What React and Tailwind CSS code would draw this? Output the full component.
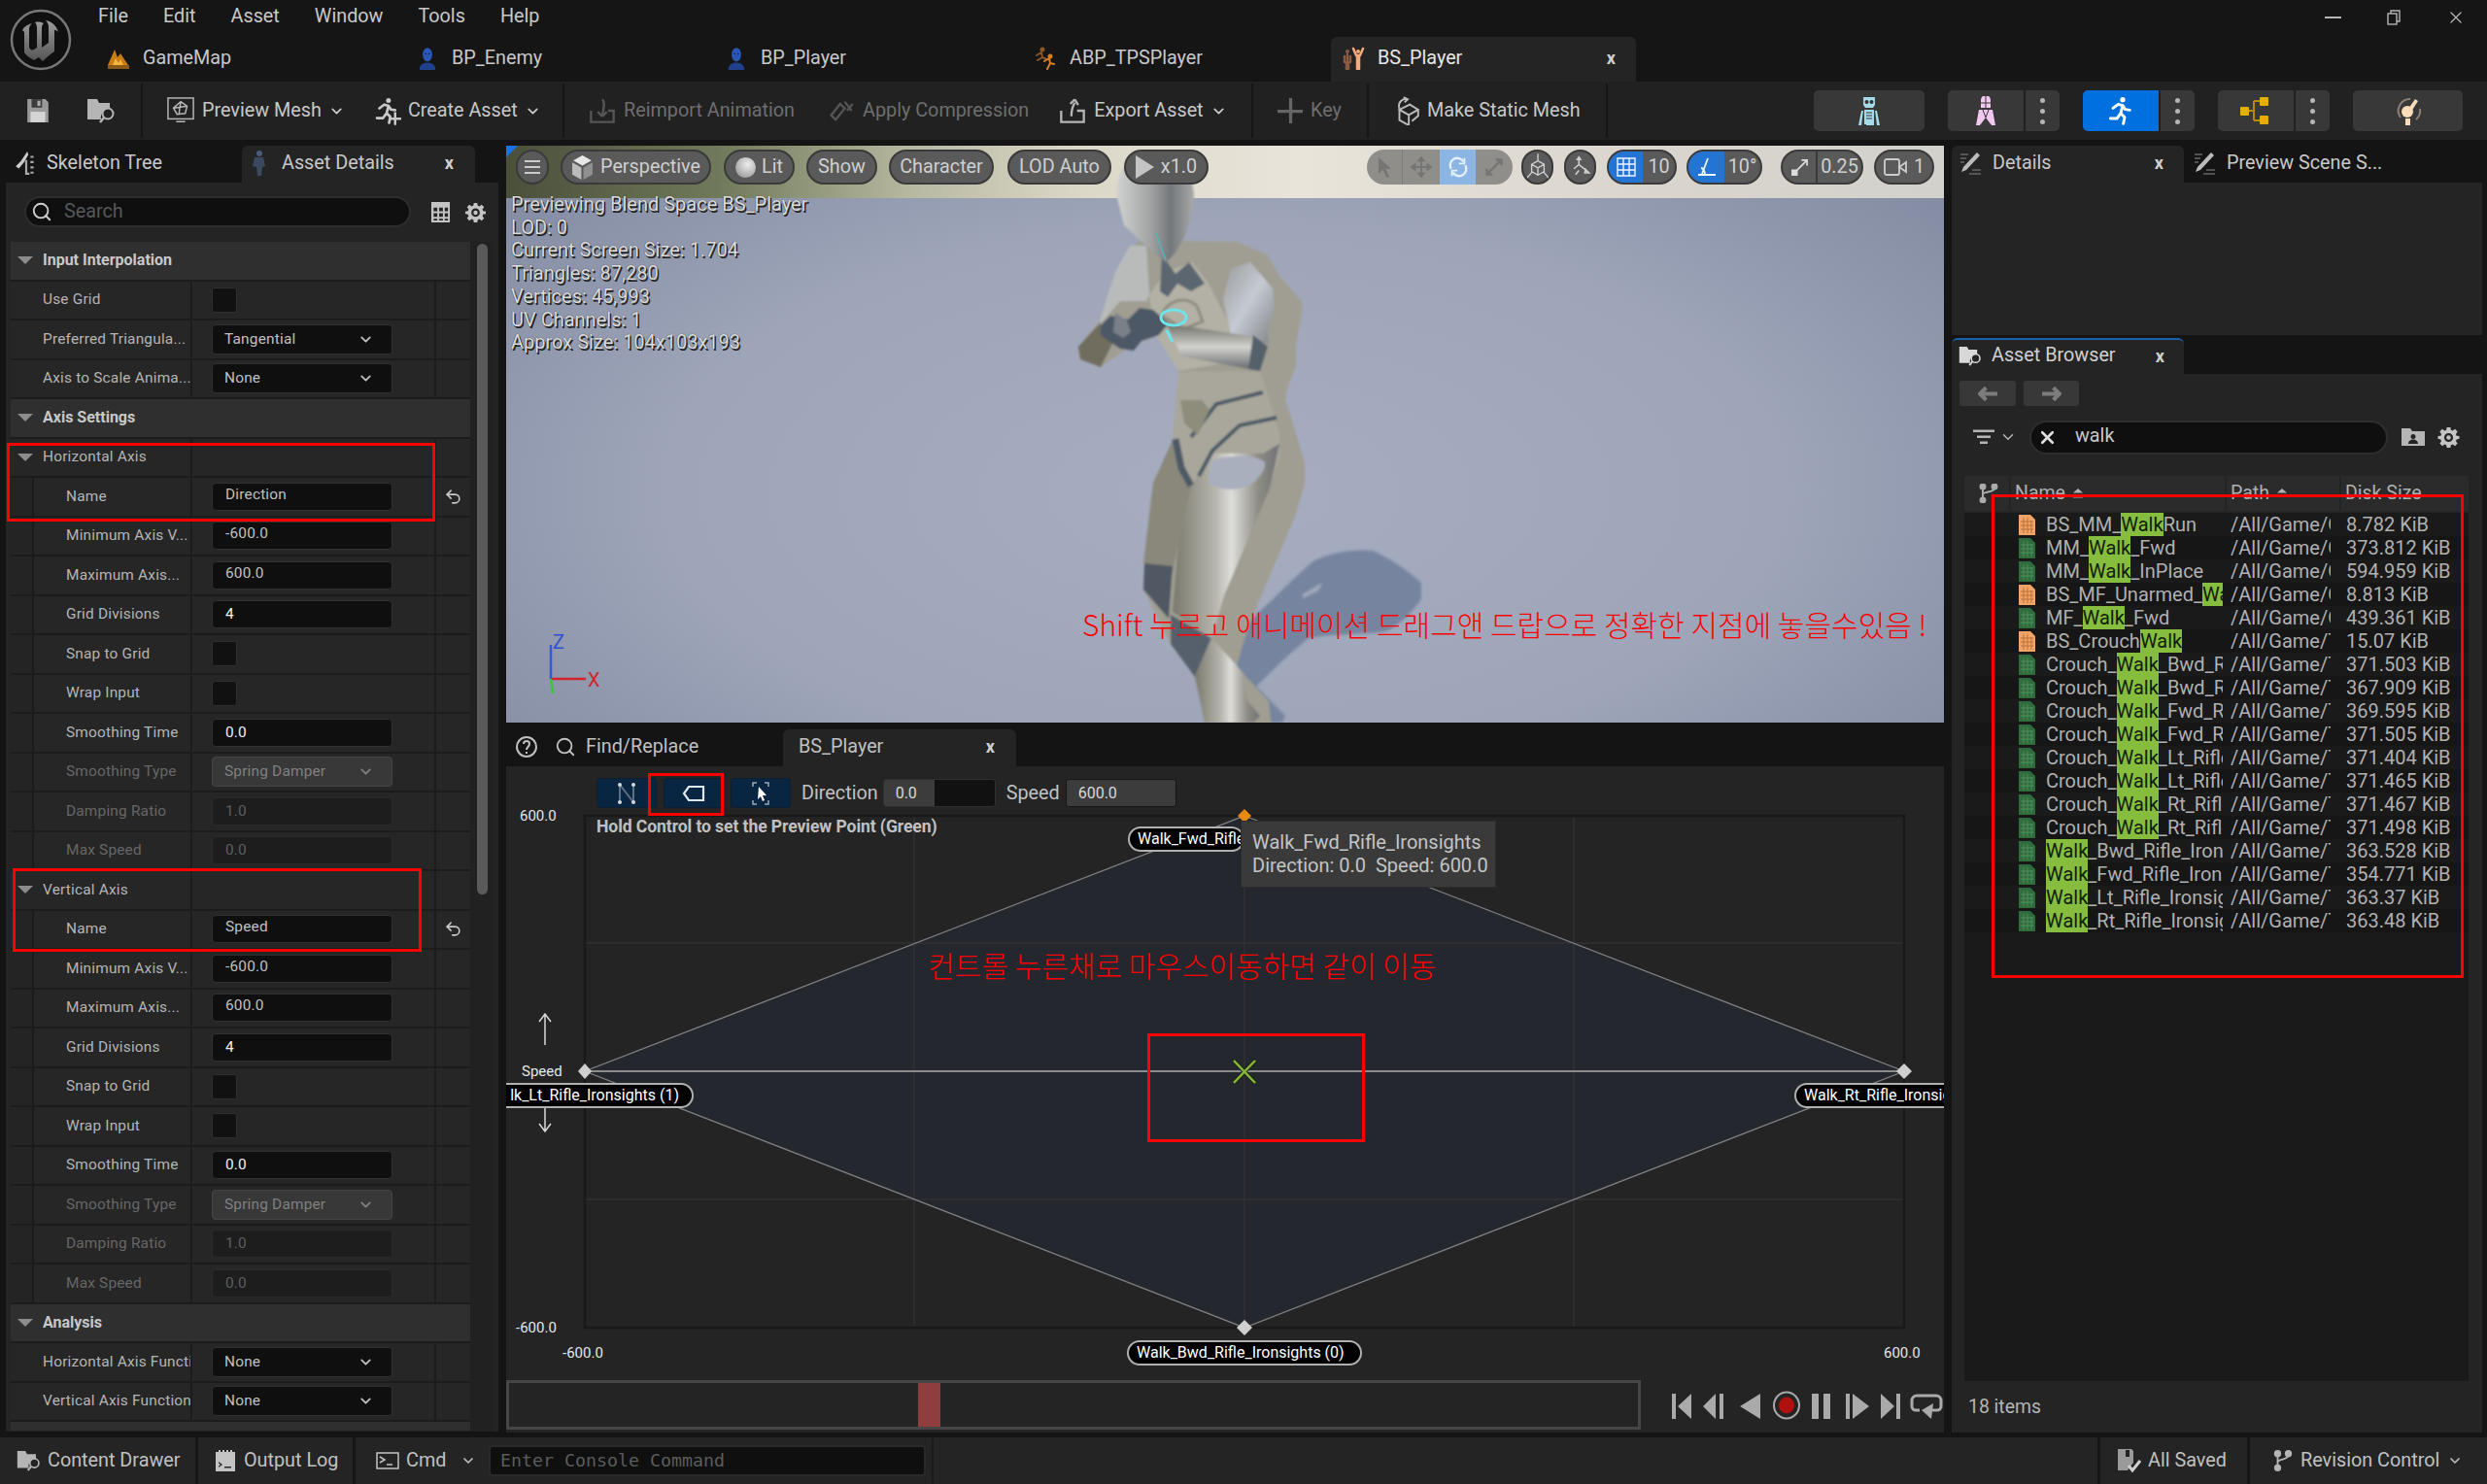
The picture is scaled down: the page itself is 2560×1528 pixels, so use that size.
import { ChevronDown, Undo2, Search, X } from "lucide-react";

const Gear = ({ className = "w-5 h-5" }) => (
  <svg viewBox="0 0 24 24" className={className}>
    <path fill="#c4c4c4" fillRule="evenodd" d="M10 1h4l.6 3.2 1.9.8 2.7-1.9 2.8 2.8-1.9 2.7.8 1.9L24 11v3l-3.1.6-.8 1.9 1.9 2.7-2.8 2.8-2.7-1.9-1.9.8L14 24h-4l-.6-3.1-1.9-.8-2.7 1.9-2.8-2.8 1.9-2.7-.8-1.9L0 14v-3l3.1-.5.8-1.9L2 5.9l2.8-2.8 2.7 1.9 1.9-.8zM12 7.5a5 5 0 1 0 0 10 5 5 0 0 0 0-10zm0 2.500a2.500 2.500 0 1 1 0 5 2.500 2.500 0 0 1 0-5z" />
  </svg>
);

const Person = () => (
  <svg viewBox="0 0 24 32" className="w-[24px] h-[24px]">
    <ellipse cx="12" cy="11" rx="6.500" ry="9.500" fill="#2a56b5" />
    <path d="M1 32c0-7 5-10 11-10s11 3 11 10z" fill="#1f418c" />
    <circle cx="9.500" cy="10" r="1" fill="#0c1c42" />
    <circle cx="14.500" cy="10" r="1" fill="#0c1c42" />
  </svg>
);

const Runner = ({ color = "#c8c8c8", className = "w-6 h-6", plus = false }) => (
  <svg viewBox="0 0 24 24" className={className} fill="none" stroke={color} strokeWidth="2.200" strokeLinecap="round" strokeLinejoin="round">
    <circle cx="13.500" cy="3.500" r="2" fill={color} stroke="none" />
    <path d="M6 10l4-3 3.500 1-1.500 6 3 3-1 5M12 14l-3 4-5 0M13.500 8l2 3 3.500 .5" />
    {plus && <path d="M19 14v9M14.500 18.500h9" stroke="#c8c8c8" strokeWidth="2" />}
  </svg>
);

const Pose = () => (
  <svg viewBox="0 0 24 24" className="w-6 h-6">
    <g fill="none" stroke="#8a5b42" strokeWidth="2.500" strokeLinecap="round">
      <circle cx="6" cy="5" r="2" fill="#8a5b42" stroke="none" />
      <path d="M6 8v7M3 10v6M9 10v6M5 16v7M7 16v7" />
    </g>
    <g fill="none" stroke="#f2a97c" strokeWidth="2.500" strokeLinecap="round">
      <circle cx="17" cy="5" r="2" fill="#f2a97c" stroke="none" />
      <path d="M12 2l3 7h4l3-7M16 10v13M18 10v13" />
    </g>
  </svg>
);

const AbpIcon = () => (
  <svg viewBox="0 0 24 24" className="w-6 h-6" fill="none" strokeWidth="2" strokeLinecap="round">
    <g stroke="#8a5527"><circle cx="9" cy="3" r="1.500" fill="#8a5527" /><path d="M3 9l5-3 1 5-5 3M9 11l4 2" /></g>
    <g stroke="#d77f1f"><circle cx="17" cy="10" r="1.500" fill="#d77f1f" /><path d="M11 15l5-3 1 5-3 6M17 17l4 1" /></g>
  </svg>
);

const Mountain = () => (
  <svg viewBox="0 0 24 24" className="w-6 h-6">
    <path d="M1 19 8 3l3 8 3-4 8 12z" fill="#c97c10" />
    <path d="M6 19l3-7 3 5 2-4 3 6z" fill="#f3b73f" />
    <rect x="1" y="19" width="22" height="4" fill="#8c5a16" />
  </svg>
);

const Logo = () => (
  <svg viewBox="0 0 64 64" className="w-[64px] h-[64px]">
    <defs>
      <linearGradient id="ue" x1="0" y1="0" x2="0" y2="1">
        <stop offset="0" stopColor="#9c9c9c" />
        <stop offset="1" stopColor="#555" />
      </linearGradient>
    </defs>
    <circle cx="32" cy="32" r="30" fill="#101010" stroke="#777" strokeWidth="2.500" />
    <path d="M13 22c2-4 6-6 10-7-2 2-3 3-3 6v18c0 3 3 4 5 3l3-2V20c0-3-1-5-2-6 4-1 7 0 9 1-2 2-2 3-2 6v19l7-5V19c0-3-1-5-3-7 6 1 11 5 13 12-2-2-3-2-4-2v22c-3 2-8 6-12 10l-4-4-5 3c-4-2-8-5-10-8V24c-1-1-2-2-2-2z" fill="url(#ue)" />
  </svg>
);

const Floppy = ({ className = "w-[26px] h-[26px]" }) => (
  <svg viewBox="0 0 24 24" className={className}>
    <path d="M2 1h17l3 3v19H2z" fill="#9a9a9a" />
    <rect x="6" y="1" width="10" height="8" fill="#3a3a3a" />
    <rect x="11.500" y="2.500" width="3" height="5" fill="#aaa" />
    <rect x="5" y="13" width="14" height="10" fill="#d4d4d4" />
  </svg>
);

const FolderFind = ({ className = "w-[30px] h-[28px]", color = "#b5b5b5" }) => (
  <svg viewBox="0 0 30 26" className={className}>
    <path d="M1 1h10l2 4h11v6a9 9 0 0 0-9 11H1z" fill={color} />
    <circle cx="22" cy="16" r="5.500" fill="none" stroke={color} strokeWidth="2" />
    <path d="M18 20l-4 5" stroke={color} strokeWidth="2.500" />
  </svg>
);

const SplitDrawer = ({ d, color = "#555" }) => (
  <svg viewBox="0 0 24 24" className="w-[30px] h-[28px]" fill="none" stroke={color} strokeWidth="2">
    <path d={d} />
  </svg>
);

const Pencil = () => (
  <svg viewBox="0 0 24 24" className="w-[24px] h-[24px]" fill="none">
    <path d="M19 1l3 3L8 19l-5 2 2-5z" fill="#bbb" />
    <path d="M2 3h8M2 7h6M2 11h4M14 19h9M11 23h12" stroke="#666" strokeWidth="1.600" />
  </svg>
);

const Tri = () => (
  <span className="w-0 h-0 border-x-[8px] border-x-transparent border-t-[8px] border-t-[#8c8c8c] shrink-0" />
);

const SortUp = ({ both }) => (
  <svg viewBox="0 0 12 12" className="w-[12px] h-[12px] shrink-0" fill="#b0b0b0">
    <path d="M6 1l5 4.500H1z" />
    {both && <path d="M1 8h10v2.500H1z" />}
  </svg>
);

const CloseX = ({ className = "" }) => <span className={`text-[#cfcfcf] font-bold ${className}`}>x</span>;

const TB = ({ icon, children, arrow, dim }) => (
  <div className={`flex items-center gap-[7px] ${dim ? "text-[#6e6e6e]" : "text-[#c8c8c8]"} text-[19.800px]`}>
    {icon}
    <span>{children}</span>
    {arrow && <ChevronDown className="w-[17px] h-[17px] text-[#c8c8c8]" strokeWidth={2.500} />}
  </div>
);

const Sep = () => <div className="w-[2px] h-[56px] bg-[#161616] shrink-0" />;

const ModeBtn = ({ children, active, more, w = "w-[78px]" }) => (
  <div className="flex h-[42px] rounded-[5px] overflow-hidden gap-[2px]">
    <div className={`${w} flex items-center justify-center ${active ? "bg-[#0070e0]" : "bg-[#383838]"}`}>{children}</div>
    {more && (
      <div className="w-[35px] bg-[#383838] flex flex-col items-center justify-center gap-[6px]">
        <span className="w-[5px] h-[5px] rounded-full bg-[#b5b5b5]" />
        <span className="w-[5px] h-[5px] rounded-full bg-[#b5b5b5]" />
        <span className="w-[5px] h-[5px] rounded-full bg-[#b5b5b5]" />
      </div>
    )}
  </div>
);

const TitleBar = () => (
  <div className="h-[84px] bg-[#151515] flex shrink-0 relative">
    <div className="w-[84px] pl-[10px] pt-[9px] shrink-0"><Logo /></div>
    <div className="flex-1 flex flex-col">
      <div className="h-[34px] flex items-center text-[#c8c8c8] text-[19.800px] pl-[17px] gap-[36px]">
        <span>File</span><span>Edit</span><span>Asset</span><span>Window</span><span>Tools</span><span>Help</span>
      </div>
      <div className="h-[4px]" />
      <div className="h-[46px] flex text-[#c8c8c8] text-[19.800px]">
        <div className="w-[318px] flex items-center gap-[13px] pl-[26px] pb-[3px]"><Mountain />GameMap</div>
        <div className="w-[318px] flex items-center gap-[13px] pl-[26px] pb-[3px]"><Person />BP_Enemy</div>
        <div className="w-[318px] flex items-center gap-[13px] pl-[26px] pb-[3px]"><Person />BP_Player</div>
        <div className="w-[318px] flex items-center gap-[13px] pl-[26px] pb-[3px]"><AbpIcon />ABP_TPSPlayer</div>
        <div className="w-[314px] ml-[14px] bg-[#242424] rounded-t-[6px] flex items-center pl-[11px] pb-[3px] text-[#e8e8e8] gap-[13px]">
          <Pose /><span className="flex-1">BS_Player</span><CloseX className="mr-[21px] text-[18px]" />
        </div>
      </div>
    </div>
    <div className="absolute right-[22px] top-[8px] flex items-center gap-[46px] text-[#b5b5b5]">
      <span className="w-[17px] h-[2px] bg-[#b5b5b5]" />
      <svg viewBox="0 0 14 16" className="w-[16px] h-[16px]" fill="none" stroke="#b5b5b5" strokeWidth="1.400">
        <rect x="1" y="4" width="9" height="11" /><path d="M4 4V1h9v11h-3" />
      </svg>
      <X className="w-[20px] h-[20px]" strokeWidth={1.500} />
    </div>
  </div>
);

const Toolbar = () => (
  <div className="h-[60px] bg-[#212121] flex items-center shrink-0">
    <div className="w-[145px] flex items-center pl-[26px] gap-[37px] shrink-0">
      <Floppy />
      <FolderFind />
    </div>
    <Sep />
    <div className="w-[432px] flex items-center pl-[24px] gap-[28px] shrink-0">
      <TB arrow icon={
        <svg viewBox="0 0 30 30" className="w-[30px] h-[28px]" fill="none" stroke="#b5b5b5" strokeWidth="1.600">
          <rect x="1" y="1" width="28" height="23" /><path d="M15 5l7 5-2 8-9 1-4-7zM15 5l-2 14M8 12l14-2M10 27h10" />
        </svg>
      }>Preview Mesh</TB>
      <TB arrow icon={<Runner plus className="w-[30px] h-[30px]" />}>Create Asset</TB>
    </div>
    <Sep />
    <div className="w-[707px] flex items-center pl-[24px] shrink-0">
      <div className="flex items-center gap-[33px]">
        <TB dim icon={<SplitDrawer d="M2 12v10h20V12h-5M12 2c3 3 1 8 0 14M12 17l-4-4M12 17l4-4" />}>Reimport Animation</TB>
        <TB dim icon={<SplitDrawer d="M3 16l8-10 4 4-8 10zM15 4l6 8M17 12l5-6" />}>Apply Compression</TB>
        <div className="-ml-[3px]"><TB arrow icon={<SplitDrawer color="#b5b5b5" d="M2 12v10h20V12h-6M11 17c0-5 1-9 3-12M14 2l-4 4M14 2l3 5" />}>Export Asset</TB></div>
      </div>
    </div>
    <Sep />
    <div className="w-[117px] flex items-center pl-[25px] gap-[8px] text-[#6e6e6e] text-[19.800px] shrink-0">
      <svg viewBox="0 0 24 24" className="w-[26px] h-[26px]" fill="#666"><path d="M11 0h3v11h10v3H14v10h-3V14H0v-3h11z" /></svg>Key
    </div>
    <Sep />
    <div className="w-[244px] flex items-center pl-[24px] gap-[6px] text-[#c8c8c8] text-[19.800px] shrink-0">
      <svg viewBox="0 0 24 28" className="w-[30px] h-[30px]" fill="none" stroke="#bbb" strokeWidth="1.800">
        <path d="M5 13l10-5 8 5-9 5zM5 14v9l9 5V19M23 14v5l-6 5" /><path d="M5 12C3 6 8 2 12 3M9 1l4 2-3 3" />
      </svg>
      Make Static Mesh
    </div>
    <Sep />
    <div className="flex-1 flex justify-end items-center pr-[25px] gap-[24px]">
      <ModeBtn w="w-[114px]">
        <svg viewBox="0 0 24 30" className="w-[26px] h-[30px]" fill="#a5dbe8">
          <path d="M6 1h12v8l-2 3H8L6 9zM7 14h10v16H9v-1H7z" />
          <circle cx="9.500" cy="6" r="2" fill="#333" /><circle cx="14.500" cy="6" r="2" fill="#333" />
          <path d="M9 17h6M9 20h6M9 23h6M5 15l-3 15M19 15l3 15" stroke="#333" />
          <path d="M4 15l-3 15h3l2-15zM20 15l3 15h-3l-2-15z" />
        </svg>
      </ModeBtn>
      <ModeBtn more>
        <svg viewBox="0 0 24 30" className="w-[26px] h-[30px]" fill="#f2c8f0">
          <path d="M7 4a5 5 0 0 1 10 0v8H7z" /><path d="M2 30l3-16h14l3 16h-4l-6-8-6 8z" />
          <path d="M7 7h10M12 0v12" stroke="#333" /><path d="M9 14l3 8 3-8" stroke="#333" fill="none" />
        </svg>
      </ModeBtn>
      <ModeBtn active more><Runner color="#ffffff" className="w-[32px] h-[32px]" /></ModeBtn>
      <ModeBtn more>
        <svg viewBox="0 0 32 30" className="w-[32px] h-[30px]">
          <path d="M8 15h6M14 5v20M14 5h6M14 25h6" stroke="#b8860b" strokeWidth="2" fill="none" />
          <rect x="0" y="11" width="9" height="9" rx="1" fill="#e5ae00" />
          <rect x="20" y="1" width="9" height="9" rx="1" fill="#e5ae00" />
          <rect x="20" y="20" width="9" height="9" rx="1" fill="#e5ae00" />
        </svg>
      </ModeBtn>
      <ModeBtn w="w-[113px]">
        <svg viewBox="0 0 30 30" className="w-[30px] h-[30px]">
          <path d="M7 22A12 12 0 0 1 17 3" fill="none" stroke="#8e8177" strokeWidth="2" />
          <path d="M23 24A12 12 0 0 0 27 13" fill="none" stroke="#8e8177" strokeWidth="2" />
          <circle cx="14" cy="16" r="6" fill="#fbdcb8" /><path d="M15 13l7-10 3 2-7 11z" fill="#fbdcb8" /><rect x="12" y="23" width="5" height="7" fill="#fbdcb8" />
        </svg>
      </ModeBtn>
    </div>
  </div>
);

const Check = () => <div className="w-[26px] h-[26px] bg-[#111] border border-[#2f2f2f] rounded-[3px]" />;
const Combo = ({ v, dim }) => (
  <div className={`w-[186px] h-[31px] rounded-[4px] border flex items-center justify-between pl-[12px] pr-[18px] ${dim ? "bg-[#383838] border-[#454545] text-[#808080]" : "bg-[#0f0f0f] border-[#303030] text-[#c0c0c0]"}`}>
    {v}<ChevronDown className="w-[17px] h-[17px]" strokeWidth={2.500} />
  </div>
);
const Field = ({ v, bright, dim, up }) => (
  <div className={`w-[186px] h-[29px] rounded-[4px] border flex items-center pl-[13px] ${dim ? "bg-[#1d1d1d] border-[#2a2a2a] text-[#5e5e5e]" : "bg-[#0f0f0f] border-[#303030]"} ${bright ? "text-[#f0f0f0]" : ""} ${!dim && !bright ? "text-[#c0c0c0]" : ""}`}>
    <span className={up ? "-mt-[4px]" : ""}>{v}</span>
  </div>
);

const Section = ({ t }) => (
  <div className="h-[40.500px] bg-[#2f2f2f] border-b-[2px] border-[#1c1c1c] flex items-center pl-[7px] gap-[10px] font-bold text-[#c8c8c8] text-[16px] [letter-spacing:0] shrink-0">
    <Tri />{t}
  </div>
);

const Row = ({ label, nested, dim, reset, group, children }) => (
  <div className="h-[40.500px] bg-[#262626] border-b-[2px] border-[#1c1c1c] flex shrink-0">
    {nested && <div className="w-[24px] bg-[#242424] border-r-[2px] border-[#1b1b1b] shrink-0" />}
    <div className={`${nested ? "w-[163px] pl-[33px]" : "w-[187px]"} ${group ? "pl-[7px] gap-[10px]" : nested ? "" : "pl-[33px]"} flex items-center whitespace-nowrap overflow-hidden border-r-[2px] border-[#1c1c1c] shrink-0 ${dim ? "text-[#666]" : "text-[#b5b5b5]"}`}>
      {group && <Tri />}{label}
    </div>
    <div className="w-[251px] flex items-center pl-[20px] border-r-[2px] border-[#1c1c1c] shrink-0">{children}</div>
    <div className="flex-1 flex items-center justify-center">
      {reset && <Undo2 className="w-[19px] h-[19px] text-[#c8c8c8]" strokeWidth={2} />}
    </div>
  </div>
);

const AxisRows = ({ title, name }) => (
  <>
    <Row label={title} group />
    <Row label="Name" nested reset><Field v={name} up /></Row>
    <Row label="Minimum Axis V..." nested><Field v="-600.0" up /></Row>
    <Row label="Maximum Axis..." nested><Field v="600.0" up /></Row>
    <Row label="Grid Divisions" nested><Field v="4" bright /></Row>
    <Row label="Snap to Grid" nested><Check /></Row>
    <Row label="Wrap Input" nested><Check /></Row>
    <Row label="Smoothing Time" nested><Field v="0.0" bright /></Row>
    <Row label="Smoothing Type" nested dim><Combo v="Spring Damper" dim /></Row>
    <Row label="Damping Ratio" nested dim><Field v="1.0" dim /></Row>
    <Row label="Max Speed" nested dim><Field v="0.0" dim /></Row>
  </>
);

const LeftPanel = () => (
  <div className="w-[513px] flex flex-col shrink-0 pl-[6px] h-full">
    <div className="h-[38px] flex items-stretch shrink-0 text-[#c8c8c8] text-[19.800px]">
      <div className="w-[243px] flex items-center gap-[8px] pl-[8px] pb-[3px]">
        <svg viewBox="0 0 24 24" className="w-[26px] h-[26px]" fill="none"><path d="M13 1l-6 9-5 5 3 2 5-6 4-7z" fill="#ccc" /><path d="M16 6h3M16 11h3M16 16h3M16 21h3M12 9v13h3" stroke="#aaa" strokeWidth="2" /></svg>
        Skeleton Tree
      </div>
      <div className="w-[240px] bg-[#242424] rounded-t-[6px] flex items-center pl-[10px] pb-[3px]">
        <svg viewBox="0 0 16 28" className="w-[16px] h-[30px]"><circle cx="8" cy="4" r="3" fill="#4b5b78" /><path d="M3 8h9l2 9-3 1-1 9H6l-1-9-4-1z" fill="#3a4860" /></svg>
        <span className="ml-[15px] flex-1">Asset Details</span>
        <CloseX className="mr-[22px] text-[18px]" />
      </div>
    </div>
    <div className="flex-1 bg-[#242424] flex flex-col pl-[5px] pr-[5px] min-h-0 mb-[6px]">
      <div className="h-[61px] flex items-center pl-[14px] pb-[1px] shrink-0">
        <div className="w-[398px] h-[32px] bg-[#0f0f0f] border-[2px] border-[#2e2e2e] rounded-full flex items-center pl-[5px] gap-[12px] text-[#585858] text-[19.800px]">
          <Search className="w-[22px] h-[22px] text-[#d0d0d0]" strokeWidth={2} />Search
        </div>
        <svg viewBox="0 0 20 22" className="w-[21px] h-[21px] ml-[20px]"><path fillRule="evenodd" d="M0 0h20v22H0zM2.500 6v4h4V6zm6 0v4h4V6zm6 0v4h3.500V6zm-12 6v4h4v-4zm6 0v4h4v-4zm6 0v4h3.500v-4zm-12 6v2h4v-2zm6 0v2h4v-2zm6 0v2h3.500v-2z" fill="#c4c4c4" /></svg>
        <Gear className="w-[21px] h-[23px] ml-[15px]" />
      </div>
      <div className="flex flex-1 min-h-0 overflow-hidden">
        <div className="w-[473px] flex flex-col text-[15.400px] [letter-spacing:0.2px] shrink-0 overflow-hidden">
          <Section t="Input Interpolation" />
          <Row label="Use Grid"><Check /></Row>
          <Row label="Preferred Triangula..."><Combo v="Tangential" /></Row>
          <Row label="Axis to Scale Anima..."><Combo v="None" /></Row>
          <Section t="Axis Settings" />
          <AxisRows title="Horizontal Axis" name="Direction" />
          <AxisRows title="Vertical Axis" name="Speed" />
          <Section t="Analysis" />
          <Row label="Horizontal Axis Functi"><Combo v="None" /></Row>
          <Row label="Vertical Axis Function"><Combo v="None" /></Row>
          <div className="h-[9px] bg-[#2f2f2f] shrink-0" />
        </div>
        <div className="w-[24px] relative shrink-0 bg-[#212121]">
          <div className="absolute left-[7px] top-[2px] w-[11px] h-[670px] bg-[#5a5a5a] rounded-full" />
        </div>
      </div>
    </div>
  </div>
);

const VPill = ({ children, className = "" }) => (
  <div className={`h-[36px] rounded-full bg-[#5a5a5a] border-[2px] border-[#3a3a3a] flex items-center justify-center text-[#cfcfcf] text-[19.800px] ${className}`}>
    {children}
  </div>
);

const Mannequin = () => (
  <svg viewBox="521 150 1480 594" className="absolute inset-0 w-full h-full">
    <defs>
      <linearGradient id="thigh" x1="0" y1="0" x2="1" y2="0">
        <stop offset="0" stopColor="#7a796e" />
        <stop offset="0.4" stopColor="#b7b6ad" />
        <stop offset="0.55" stopColor="#dededb" />
        <stop offset="0.8" stopColor="#8e8d85" />
        <stop offset="1" stopColor="#6f7176" />
      </linearGradient>
      <linearGradient id="arm" x1="0" y1="0" x2="0" y2="1">
        <stop offset="0" stopColor="#6d6d66" />
        <stop offset="0.5" stopColor="#d2d2ce" />
        <stop offset="1" stopColor="#5f6166" />
      </linearGradient>
      <linearGradient id="shoulder" x1="0" y1="0" x2="1" y2="1">
        <stop offset="0" stopColor="#9a9b9a" />
        <stop offset="0.5" stopColor="#c5cad3" />
        <stop offset="1" stopColor="#7f8184" />
      </linearGradient>
      <linearGradient id="head" x1="0" y1="0" x2="1" y2="0">
        <stop offset="0" stopColor="#d2d4d2" />
        <stop offset="0.45" stopColor="#a0a2a2" />
        <stop offset="0.7" stopColor="#74777a" />
        <stop offset="1" stopColor="#a8aaa9" />
      </linearGradient>
      <filter id="soft" x="-5%" y="-5%" width="110%" height="110%">
        <feGaussianBlur stdDeviation="1" />
      </filter>
      <filter id="softer" x="-10%" y="-10%" width="120%" height="120%">
        <feGaussianBlur stdDeviation="1.800" />
      </filter>
    </defs>
    {/* floor shadow */}
    <g filter="url(#softer)">
      <path d="M1263 663c14-16 30-30 44-43 14-14 30-30 46-43 18-8 40-12 60-10 18 8 36 20 50 33v17c-10 14-22 26-36 33-26 4-54 2-80 7-20 16-38 34-54 50l30 30-3 7h-30z" fill="#76849f" />
      <path d="M1341 612l20-12-4 8-16 8z" fill="#a3aabd" />
    </g>
    <g filter="url(#soft)">
      {/* whole figure silhouette, parts are layered over it */}
      <path d="M1173 247l-25 33-16 50-22 27 2 13 21 8 32-22 30-12 18 39-6 70-27 100-3 54 28 56 25 34 25 36 10 23 14 17h44l-14-24-3-27-33-36 13-44 47-110 10-33v-23l-15-50-5-14 3-15 8-19v-23l5-27 2-16-23-27-14-23-30-13z" fill="#a09e93" />
      {/* back leg */}
      <path d="M1207 453l20 47-14 57-6 33-30-10 10-83z" fill="#8a887a" />
      <path d="M1178 580l29 3-4 54-26-30z" fill="#4f5864" />
      {/* waist and hips */}
      <path d="M1213 383l84-1 5 15 15 50v23l-10 33-60-3-20-3-20-45z" fill="#a9a79c" />
      {/* front thigh */}
      <path d="M1227 500l20-33 53 0 17-10-10 46-47 110-13 44-40-27 6-73z" fill="url(#thigh)" />
      <path d="M1246 478c6-10 46-12 56-2 2 6-8 22-22 26-12 4-30 2-36-6z" fill="#a9afbd" />
      {/* dark suit seams */}
      <path d="M1210 452l6 30 10 18" fill="none" stroke="#4e5a66" strokeWidth="7" />
      <path d="M1234 490l14-26 28-26 38-8M1226 450l26-34 48-12" fill="none" stroke="#4e5a66" strokeWidth="4" />
      <path d="M1215 412l22 0 8 10-12 26-14-12z" fill="#8e8c7a" />
      {/* shin */}
      <path d="M1205 633l42 24-17 40-25-34z" fill="#56606c" />
      <path d="M1247 657l33 36 3 27 14 17-7 7h-50l-10-47z" fill="url(#thigh)" />
      {/* chest */}
      <path d="M1183 303l17-23 27-10 16 20 24 47 30 30-84 15-25-40z" fill="#b3b1a6" />
      <path d="M1196 262l14 20 14-12 16 22-14 8-14-8-10 14-8-6z" fill="#5c6670" />
      <path d="M1196 325c6-18 26-20 36-10l6 16-20 8z" fill="none" stroke="#8e8c80" strokeWidth="3" />
      {/* upper arm, forearm */}
      <path d="M1148 280l15-27 17 0 3 50-3 7-27 0-20 23-1-3z" fill="#b9bbbb" />
      <path d="M1112 370l-2-13 22-24 15 17-14 28z" fill="#6f6d5e" />
      {/* far shoulder */}
      <path d="M1267 277l20-7 23 27 2 20-7 23 1 14-38-6-9-40z" fill="url(#shoulder)" />
      {/* near forearm */}
      <path d="M1200 333l93 14 10 10-6 25-80-15z" fill="url(#arm)" />
      <path d="M1290 345l15 12-8 25-12-2z" fill="#55606b" />
      {/* hands */}
      <path d="M1133 335l10-10 18 4 12-12 14 2 16 14-10 12-18 6-8 10-14-2-12-8-8-6z" fill="#4d5866" />
      <path d="M1148 322l12 8 4 12-8 6-10-6z" fill="#7a8088" />
    </g>
    <ellipse cx="1208" cy="327" rx="13" ry="8" fill="none" stroke="#6fe3ea" strokeWidth="3" />
    <path d="M1201 340l6 12" stroke="#6fe3ea" strokeWidth="3" />
    {/* head */}
    <path d="M1149 200c0-30 20-42 40-40s38 14 40 40c0 30-15 60-29 70-12-8-33-30-43-38z" fill="url(#head)" filter="url(#soft)" />
    <path d="M1190 240l10 28" stroke="#4fb5bf" strokeWidth="1.500" />
  </svg>
);

const Viewport = () => (
  <div className="h-[594px] relative overflow-hidden shrink-0 bg-[radial-gradient(ellipse_at_50%_60%,#a6adc0_0%,#9ea5b9_55%,#7f879f_100%)]">
    <div className="h-[54px] bg-[linear-gradient(90deg,#4a4f3a_0%,#717a5a_15%,#b6b8a0_28%,#dcd8c8_40%,#e8e4da_55%,#d9d5cd_80%,#d3d1cc_100%)]" />
    <Mannequin />
    <svg viewBox="0 0 72 72" className="absolute left-[40px] top-[500px] w-[72px] h-[72px]" fill="none">
      <path d="M6 49V14" stroke="#2f5bd8" strokeWidth="2.500" /><path d="M6 49h36" stroke="#d3232a" strokeWidth="2.500" /><path d="M6 49l2 15" stroke="#3cc43c" strokeWidth="2.500" />
      <text x="8" y="18" fill="#2f4fd0" fontSize="20" fontFamily="Roboto">Z</text>
      <text x="44" y="57" fill="#d3232a" fontSize="20" fontFamily="Roboto">X</text>
    </svg>
    <div className="absolute left-[5px] top-[49px] text-[20px] leading-[23.700px] text-[#dcdcdc] [text-shadow:1.500px_1.500px_0_#222,0_0_1px_#222]">
      <div>Previewing Blend Space BS_Player</div>
      <div>LOD: 0</div>
      <div>Current Screen Size: 1.704</div>
      <div>Triangles: 87,280</div>
      <div>Vertices: 45,993</div>
      <div>UV Channels: 1</div>
      <div>Approx Size: 104x103x193</div>
    </div>
    <div className="absolute left-0 top-0 w-0 h-0 border-t-[12px] border-r-[12px] border-t-[#1a73e0] border-r-transparent" />
    <div className="absolute left-[10px] right-[10px] top-[4px] flex items-center">
      <VPill className="w-[34px] mr-[12px]">
        <span className="flex flex-col gap-[4px]"><span className="w-[16px] h-[2px] bg-[#ccc]" /><span className="w-[16px] h-[2px] bg-[#ccc]" /><span className="w-[16px] h-[2px] bg-[#ccc]" /></span>
      </VPill>
      <VPill className="w-[155px] mr-[13px] gap-[7px]">
        <svg viewBox="0 0 20 24" className="w-[23px] h-[25px]"><path d="M10 0l9 5-9 5-9-5z" fill="#e8e8e8" /><path d="M0 7l9 5v12l-9-5z" fill="#bcbcbc" /><path d="M20 7l-9 5v12l9-5z" fill="#8f8f8f" /></svg>
        Perspective
      </VPill>
      <VPill className="w-[73px] mr-[12px] gap-[6px]"><span className="w-[21px] h-[21px] rounded-full bg-[radial-gradient(circle_at_60%_35%,#eee,#888)]" />Lit</VPill>
      <VPill className="w-[73px] mr-[12px]">Show</VPill>
      <VPill className="w-[108px] mr-[14px]">Character</VPill>
      <VPill className="w-[107px] mr-[13px]">LOD Auto</VPill>
      <VPill className="w-[87px] gap-[7px] bg-[#4c4c4c]">
        <span className="w-0 h-0 border-y-[12px] border-y-transparent border-l-[19px] border-l-[#c4c4c4]" />x1.0
      </VPill>
      <div className="flex-1" />
      <div className="w-[150px] h-[36px] rounded-full bg-[#8f8e8b] flex overflow-hidden mr-[9px]">
        <div className="w-[37px] flex items-center justify-center border-r border-[#7d7d7b]"><svg viewBox="0 0 16 24" className="w-[15px] h-[22px]"><path d="M1 1l14 13-6 0 4 9-3 1-4-9-5 4z" fill="#757575" /></svg></div>
        <div className="w-[38px] flex items-center justify-center"><svg viewBox="0 0 24 24" className="w-[22px] h-[22px]" stroke="#757575" strokeWidth="2" fill="#757575"><path d="M12 1v22M1 12h22M12 1l-3 4h6zM12 23l-3-4h6zM1 12l4-3v6zM23 12l-4-3v6z" /></svg></div>
        <div className="w-[37px] flex items-center justify-center bg-[#8bb6e4]"><svg viewBox="0 0 24 24" className="w-[22px] h-[24px]" fill="none" stroke="#e6eff8" strokeWidth="2.500"><path d="M4 14A8 8 0 0 1 18 6M20 10A8 8 0 0 1 6 18" /><path d="M19 2v6h-6M5 22v-6h6" strokeWidth="2" /></svg></div>
        <div className="flex-1 flex items-center justify-center"><svg viewBox="0 0 24 24" className="w-[20px] h-[20px]" fill="none" stroke="#757575" strokeWidth="3"><path d="M4 20L20 4M14 3h7v7M3 14v7h7" /></svg></div>
      </div>
      <div className="w-[33px] h-[36px] rounded-full bg-[#5a5a5a] border-[2px] border-[#3a3a3a] flex items-center justify-center mr-[11px]">
        <svg viewBox="0 0 24 30" className="w-[22px] h-[28px]" fill="none" stroke="#d0d0d0" strokeWidth="1.500"><path d="M12 0v9M5 12l7-4 7 4v8l-7 4-7-4zM12 16v8M5 12l7 4 7-4M6 20l-6 7M18 20l6 7" /></svg>
      </div>
      <div className="w-[33px] h-[36px] rounded-full bg-[#5a5a5a] border-[2px] border-[#3a3a3a] flex items-center justify-center mr-[11px]">
        <svg viewBox="0 0 24 30" className="w-[22px] h-[26px]" fill="none" stroke="#d0d0d0" strokeWidth="1.800"><path d="M10 3v10M4 17l6-5 10 8M6 24l4-5M10 3l-2 3h4zM22 22l-5 0 1-4z" /></svg>
      </div>
      <div className="w-[72px] h-[36px] rounded-full bg-[#5a5a5a] border-[2px] border-[#3a3a3a] flex overflow-hidden items-center mr-[10px] text-[#cfcfcf] text-[19.800px]">
        <div className="w-[35px] h-full bg-[#2474d4] flex items-center justify-center">
          <svg viewBox="0 0 20 20" className="w-[20px] h-[22px]" fill="none" stroke="#eef5ff" strokeWidth="1.400"><path d="M1 1h18v18H1zM7 1v18M13 1v18M1 7h18M1 13h18" /></svg>
        </div>
        <span className="flex-1 text-center">10</span>
      </div>
      <div className="w-[78px] h-[36px] rounded-full bg-[#5a5a5a] border-[2px] border-[#3a3a3a] flex overflow-hidden items-center mr-[19px] text-[#cfcfcf] text-[19.800px]">
        <div className="w-[37px] h-full bg-[#2474d4] flex items-center justify-center">
          <svg viewBox="0 0 20 20" className="w-[20px] h-[22px]" fill="none" stroke="#eef5ff" strokeWidth="1.800"><path d="M11 1L5 17M1 18h18M4 11c2 0 4 3 4 7" /></svg>
        </div>
        <span className="flex-1 text-center">10°</span>
      </div>
      <div className="w-[85px] h-[36px] rounded-full bg-[#5a5a5a] border-[2px] border-[#3a3a3a] flex overflow-hidden items-center mr-[11px] text-[#cfcfcf] text-[19.800px]">
        <div className="w-[36px] h-full border-r-2 border-[#3a3a3a] flex items-center justify-center">
          <svg viewBox="0 0 20 20" className="w-[19px] h-[19px]" fill="none" stroke="#ddd" strokeWidth="1.800"><path d="M7 13L18 2M12 2h6v6" /><rect x="2" y="13" width="5" height="5" fill="#ddd" /></svg>
        </div>
        <span className="flex-1 text-center">0.25</span>
      </div>
      <div className="w-[62px] h-[36px] rounded-full bg-[#5a5a5a] border-[2px] border-[#3a3a3a] flex items-center justify-center gap-[7px] text-[#cfcfcf] text-[19.800px]">
        <svg viewBox="0 0 24 20" className="w-[24px] h-[22px]" fill="none" stroke="#ccc" strokeWidth="1.800"><rect x="1" y="2" width="15" height="16" rx="2" /><path d="M16 10l7-5v10z" /></svg>1
      </div>
    </div>
    <div className="absolute left-[593px] top-[470px] text-[#ff0000] text-[30px] whitespace-nowrap [font-family:'Noto_Sans_CJK_KR','Noto_Sans',sans-serif] font-light">
      Shift 누르고 애니메이션 드래그앤 드랍으로 정확한 지점에 놓을수있음 !
    </div>
  </div>
);

const Pill = ({ className, children }) => (
  <div className={`absolute h-[26px] rounded-full bg-black border-[2px] border-[#b0b0b0] text-white text-[16px] flex items-center whitespace-nowrap overflow-hidden ${className}`}>{children}</div>
);
const ModeIcon = ({ children }) => (
  <div className="w-[62px] h-[31px] bg-[#082642] border border-[#0f1f30] rounded-[3px] flex items-center justify-center">{children}</div>
);

// all coordinates in the graph are page coordinates minus the canvas origin (521, 840)
const GraphCanvas = () => (
  <div className="relative h-[575px] text-[15px] text-[#e6e6e6]">
    <svg viewBox="521 840 1480 575" className="absolute inset-0 w-full h-full overflow-visible">
      <path d="M1281 840L1960 1103 1281 1367 602 1103z" fill="#25272e" />
      <path d="M941 840V1367M1281 840V1367M1620 840V1367M602 971H1960M602 1235H1960" stroke="#303135" strokeWidth="1.500" fill="none" />
      <rect x="602" y="840" width="1358" height="527" fill="none" stroke="#191919" strokeWidth="2.500" />
      <path d="M1281 840L1960 1103 1281 1367 602 1103z" fill="none" stroke="#7f7f7f" strokeWidth="1.300" />
      <path d="M602 1103H1960" stroke="#8c8c8c" strokeWidth="2" />
      <path d="M1281 833l7 7-7 7-7-7z" fill="#e88a12" />
      <path d="M602 1095l7 8-7 8-7-8z" fill="#cfcfcf" />
      <path d="M1960 1095l8 8-8 8-8-8z" fill="#cfcfcf" />
      <path d="M1281 1359l8 8-8 8-8-8z" fill="#cfcfcf" />
      <path d="M1270 1092l22 23M1292 1092l-22 23" stroke="#1c2612" strokeWidth="4.500" />
      <path d="M1270 1092l22 23M1292 1092l-22 23" stroke="#86b83a" strokeWidth="2.500" />
      <path d="M561 1076v-32M555 1052l6-8 6 8M561 1141v24M555 1157l6 8 6-8" stroke="#d8d8d8" strokeWidth="1.500" fill="none" />
    </svg>
    <div className="absolute left-[93px] top-[0px] font-bold text-[#c0c0c0] text-[17.600px] leading-[22px] [letter-spacing:-0.1px]">Hold Control to set the Preview Point (Green)</div>
    <div className="absolute left-[14px] -top-[11px]">600.0</div>
    <div className="absolute left-[10px] top-[516px]">-600.0</div>
    <div className="absolute left-[58px] top-[542px]">-600.0</div>
    <div className="absolute left-[1418px] top-[542px]">600.0</div>
    <div className="absolute left-[16px] top-[252px]">Speed</div>
    <Pill className="left-[640px] top-[11px] w-[120px] pl-[8px]">Walk_Fwd_Rifle_Ironsights (3)</Pill>
    <Pill className="left-0 top-[275px] w-[193px] justify-end pr-[13px] rounded-l-none border-l-0">lk_Lt_Rifle_Ironsights (1)</Pill>
    <Pill className="left-[1326px] top-[275px] w-[154px] rounded-r-none border-r-0 pl-[8px]">Walk_Rt_Rifle_Ironsights (2)</Pill>
    <Pill className="left-[639px] top-[540px] w-[242px] pl-[8px]">Walk_Bwd_Rifle_Ironsights (0)</Pill>
    <div className="absolute left-[756px] top-[5px] w-[263px] h-[69px] bg-[#3a3a3a] border border-[#2c2c2c] px-[11px] pt-[9px] text-[#c4c4c4] text-[20px] leading-[24px] whitespace-nowrap">
      <div>Walk_Fwd_Rifle_Ironsights</div>
      <div>Direction: 0.0&nbsp; Speed: 600.0</div>
    </div>
    <div className="absolute left-[434px] top-[131px] text-[#ff0000] text-[30px] whitespace-nowrap [font-family:'Noto_Sans_CJK_KR','Noto_Sans',sans-serif] font-light">
      컨트롤 누른채로 마우스이동하면 같이 이동
    </div>
  </div>
);

const Transport = () => (
  <svg viewBox="1721 1435 278 26" className="w-[278px] h-[26px] shrink-0 overflow-visible">
    <g fill="#aaa">
      <path d="M1721 1435h4v26h-4zM1741 1435v26l-14-13z" />
      <path d="M1766 1435v26l-13-13zM1770 1435h4v26h-4z" />
      <path d="M1812 1435v26l-21-13z" />
      <path d="M1865 1435h7v26h-7zM1877 1435h7v26h-7z" />
      <path d="M1900 1435h4v26h-4zM1907 1435l17 13-17 13z" />
      <path d="M1936 1435l14 13-14 13zM1952 1435h4v26h-4z" />
    </g>
    <ellipse cx="1839" cy="1447" rx="13" ry="13.500" fill="none" stroke="#aaa" strokeWidth="2" />
    <ellipse cx="1839" cy="1447" rx="8" ry="8.500" fill="#b01010" />
    <path d="M1976 1452h-4a4 4 0 0 1-4-4v-6a5 5 0 0 1 5-5h20a5 5 0 0 1 5 5v6a4 4 0 0 1-4 4h-6" fill="none" stroke="#aaa" strokeWidth="3" />
    <path d="M1990 1445l-2 16-10-9z" fill="#aaa" />
  </svg>
);

const BlendPanel = () => (
  <>
    <div className="h-[7px] shrink-0" />
    <div className="h-[38px] flex items-stretch shrink-0 text-[#c0c0c0] text-[19.800px]">
      <div className="w-[285px] flex items-center pl-[10px] gap-[18px] pb-[3px]">
        <svg viewBox="0 0 22 24" className="w-[22px] h-[24px]" fill="none" stroke="#c0c0c0" strokeWidth="2"><circle cx="11" cy="12" r="10" /><path d="M8 9c0-4 6-4 6 0 0 3-3 3-3 6M11 17v2" /></svg>
        <Search className="w-[22px] h-[24px]" strokeWidth={2} />
        <span className="-ml-[8px]">Find/Replace</span>
      </div>
      <div className="w-[240px] bg-[#242424] rounded-t-[6px] flex items-center pl-[16px] pb-[3px]">
        <span className="flex-1">BS_Player</span><CloseX className="mr-[22px] text-[18px]" />
      </div>
    </div>
    <div className="flex-1 bg-[#242424] flex flex-col min-h-0">
      <div className="h-[51px] flex items-center pl-[93px] pt-[4px] text-[#c0c0c0] text-[19.800px] shrink-0">
        <div className="flex gap-[7px] mr-[11px]">
          <ModeIcon>
            <svg viewBox="0 0 20 24" className="w-[20px] h-[24px]"><path d="M3 3v18M3 3l14 18M17 3v18" stroke="#5d7086" strokeWidth="2" /><g fill="#d8d8d8"><circle cx="3" cy="3" r="2" /><circle cx="17" cy="3" r="2" /><circle cx="3" cy="21" r="2" /><circle cx="17" cy="21" r="2" /></g></svg>
          </ModeIcon>
          <ModeIcon>
            <svg viewBox="0 0 24 20" className="w-[24px] h-[20px]" fill="none" stroke="#dfe7ee" strokeWidth="2.200"><path d="M7 3h15v14H7l-5-7z" /></svg>
          </ModeIcon>
          <ModeIcon>
            <svg viewBox="0 0 20 26" className="w-[20px] h-[26px]" fill="none" stroke="#9aa8b5" strokeWidth="1.500"><path d="M6 2H2v4M14 2h4v4M6 24H2v-4M14 24h4v-4" /><path d="M8 6l8 9-4 0 2 5-2 1-2-5-3 3z" fill="#fff" stroke="none" /></svg>
          </ModeIcon>
        </div>
        <span>Direction</span>
        <div className="w-[116px] h-[29px] bg-[#111] rounded-[3px] border border-[#303030] ml-[5px] mr-[11px] overflow-hidden">
          <div className="w-[52px] h-full bg-[#3c3c3c] flex items-center pl-[12px] text-[16px] text-[#d8d8d8]">0.0</div>
        </div>
        <span>Speed</span>
        <div className="w-[114px] h-[29px] bg-[#3c3c3c] rounded-[3px] border border-[#161616] ml-[6px] flex items-center pl-[12px] text-[16px] text-[#d8d8d8]">600.0</div>
      </div>
      <GraphCanvas />
      <div className="flex flex-1 min-h-0">
        <div className="w-[1168px] h-[51px] mt-[6px] border-[3px] border-[#464646] bg-[#242424] pl-[421px] shrink-0">
          <div className="w-[23px] h-full bg-[#8f3d3d]" />
        </div>
        <div className="pl-[32px] pt-[20px]"><Transport /></div>
      </div>
    </div>
  </>
);

const rows = [
  ["BS_MM_", "Walk", "Run", "/All/Game/Characters", "8.782 KiB", 1],
  ["MM_", "Walk", "_Fwd", "/All/Game/Characters", "373.812 KiB"],
  ["MM_", "Walk", "_InPlace", "/All/Game/Characters", "594.959 KiB"],
  ["BS_MF_Unarmed_", "Walk", "", "/All/Game/Characters", "8.813 KiB", 1],
  ["MF_", "Walk", "_Fwd", "/All/Game/Characters", "439.361 KiB"],
  ["BS_Crouch", "Walk", "", "/All/Game/TPS", "15.07 KiB", 1],
  ["Crouch_", "Walk", "_Bwd_Rifle_Hip", "/All/Game/TPS", "371.503 KiB"],
  ["Crouch_", "Walk", "_Bwd_Rifle_Iron", "/All/Game/TPS", "367.909 KiB"],
  ["Crouch_", "Walk", "_Fwd_Rifle_Hip", "/All/Game/TPS", "369.595 KiB"],
  ["Crouch_", "Walk", "_Fwd_Rifle_Iron", "/All/Game/TPS", "371.505 KiB"],
  ["Crouch_", "Walk", "_Lt_Rifle_Hip", "/All/Game/TPS", "371.404 KiB"],
  ["Crouch_", "Walk", "_Lt_Rifle_Iron", "/All/Game/TPS", "371.465 KiB"],
  ["Crouch_", "Walk", "_Rt_Rifle_Hip", "/All/Game/TPS", "371.467 KiB"],
  ["Crouch_", "Walk", "_Rt_Rifle_Iron", "/All/Game/TPS", "371.498 KiB"],
  ["", "Walk", "_Bwd_Rifle_Ironsights", "/All/Game/TPS", "363.528 KiB"],
  ["", "Walk", "_Fwd_Rifle_Ironsights", "/All/Game/TPS", "354.771 KiB"],
  ["", "Walk", "_Lt_Rifle_Ironsights", "/All/Game/TPS", "363.37 KiB"],
  ["", "Walk", "_Rt_Rifle_Ironsights", "/All/Game/TPS", "363.48 KiB"],
];

const FileIcon = ({ orange }) => {
  const c = orange ? "#f2a468" : "#2f6b3c";
  const l = orange ? "#b8713a" : "#4f8f5c";
  return (
    <svg viewBox="0 0 17 21" className="w-[17px] h-[21px] shrink-0">
      <path d="M0 0h12l5 5v16H0z" fill={c} />
      <path d="M2 7h13M2 11h13M2 15h13M5 3v16M9 3v16M13 6v13" stroke={l} strokeWidth="1" />
    </svg>
  );
};

const HeadCell = ({ className, children }) => (
  <div className={`bg-[#2b2b2b] h-[36px] flex items-center pl-[4px] gap-[7px] text-[#b0b0b0] shrink-0 ${className}`}>{children}</div>
);

const AssetBrowser = () => (
  <div className="flex-1 flex flex-col min-h-0">
    <div className="h-[37px] flex shrink-0 text-[#d0d0d0] text-[19.800px]">
      <div className="w-[239px] bg-[#242424] rounded-t-[6px] border-t-[2px] border-[#1a5fa8] flex items-center pl-[7px] pb-[3px] gap-[10px]">
        <FolderFind className="w-[24px] h-[21px]" color="#d8d8d8" />
        <span className="flex-1">Asset Browser</span><CloseX className="mr-[20px] text-[18px]" />
      </div>
    </div>
    <div className="flex-1 bg-[#242424] flex flex-col min-h-0 mb-[5px]">
      <div className="h-[40px] flex items-center pl-[8px] gap-[8px] shrink-0">
        <div className="w-[58px] h-[26px] bg-[#383838] rounded-[3px] flex items-center justify-center">
          <svg viewBox="0 0 20 14" className="w-[21px] h-[15px]" fill="none" stroke="#7c7c7c" strokeWidth="4"><path d="M19 7H3M8 1L2 7l6 6" /></svg>
        </div>
        <div className="w-[57px] h-[26px] bg-[#383838] rounded-[3px] flex items-center justify-center">
          <svg viewBox="0 0 20 14" className="w-[21px] h-[15px]" fill="none" stroke="#7c7c7c" strokeWidth="4"><path d="M1 7h16M12 1l6 6-6 6" /></svg>
        </div>
      </div>
      <div className="h-[48px] flex items-center pl-[22px] pt-[2px] shrink-0">
        <svg viewBox="0 0 22 16" className="w-[22px] h-[17px]" fill="#b5b5b5"><path d="M0 0h22v2.500H0zM4 6h14v2.500H4zM7 12h8v2.500H7z" /></svg>
        <ChevronDown className="w-[18px] h-[18px] text-[#b5b5b5] ml-[5px]" strokeWidth={2} />
        <div className="w-[369px] h-[35px] ml-[13px] rounded-full bg-[#0f0f0f] border-[2px] border-[#2e2e2e] flex items-center pl-[6px] gap-[18px] text-[#c8c8c8] text-[19.800px]">
          <X className="w-[21px] h-[21px] text-[#e0e0e0]" strokeWidth={3} />
          <span className="-mt-[2px]">walk</span>
        </div>
        <svg viewBox="0 0 24 18" className="w-[24px] h-[18px] ml-[14px]" fill="#b5b5b5"><path fillRule="evenodd" d="M0 0h9l2 3h13v15H0zM12 6a2.500 2.500 0 1 0 0 5 2.500 2.500 0 0 0 0-5zM7 16c0-6 10-6 10 0z" /></svg>
        <Gear className="w-[23px] h-[22px] ml-[13px]" />
      </div>
      <div className="pl-[13px] pr-[14px] pt-[17px] flex-1 min-h-0 flex flex-col">
        <div className="flex gap-[2px] text-[19.500px] shrink-0 mb-[2px]">
          <HeadCell className="w-[46px] justify-center pl-0">
            <svg viewBox="0 0 20 20" className="w-[20px] h-[20px]" fill="none" stroke="#aaa" strokeWidth="2"><circle cx="4" cy="3" r="2.500" fill="#aaa" /><circle cx="4" cy="17" r="2.500" fill="#aaa" /><circle cx="16" cy="3" r="2.500" fill="#aaa" /><path d="M4 5v10M16 5c0 4-12 3-12 6" /></svg>
          </HeadCell>
          <HeadCell className="w-[220px]">Name <SortUp both /></HeadCell>
          <HeadCell className="w-[116px]">Path <SortUp /></HeadCell>
          <HeadCell className="flex-1">Disk Size</HeadCell>
        </div>
        <div className="flex-1 bg-[#1a1a1a] text-[20px] text-[#b0b0b0]">
          {rows.map((r, i) => (
            <div key={i} className={`h-[24.030px] flex items-center ${i % 2 ? "bg-[#161616]" : "bg-[#1a1a1a]"}`}>
              <div className="w-[266px] pl-[56px] pr-0 flex items-center gap-[11px] overflow-hidden shrink-0 whitespace-nowrap">
                <FileIcon orange={r[5]} />
                <span className="flex leading-[24px] overflow-hidden">
                  <span className="whitespace-pre">{r[0]}</span>
                  <span className="bg-[#86bd3f] text-[#10200a] shrink-0">{r[1]}</span>
                  <span className="whitespace-pre">{r[2]}</span>
                </span>
              </div>
              <div className="w-[103px] ml-[8px] overflow-hidden whitespace-nowrap shrink-0">{r[3]}</div>
              <div className="pl-[16px] whitespace-nowrap">{r[4]}</div>
            </div>
          ))}
        </div>
      </div>
      <div className="h-[53px] flex items-center pl-[17px] text-[#b5b5b5] text-[19.400px] shrink-0">18 items</div>
    </div>
  </div>
);

const RightCol = () => (
  <div className="flex-1 flex flex-col min-w-0 pr-[5px] h-full">
    <div className="h-[38px] flex shrink-0 text-[#c8c8c8] text-[19.800px]">
      <div className="w-[239px] bg-[#242424] rounded-t-[6px] flex items-center pl-[7px] pb-[3px] gap-[11px]">
        <Pencil /><span className="flex-1">Details</span><CloseX className="mr-[21px] text-[18px]" />
      </div>
      <div className="flex items-center pl-[9px] pb-[3px] gap-[11px]"><Pencil />Preview Scene S...</div>
    </div>
    <div className="h-[157px] bg-[#242424] shrink-0" />
    <div className="h-[3px] shrink-0" />
    <AssetBrowser />
  </div>
);

const StatusBar = () => (
  <div className="h-[48px] bg-[#242424] flex items-stretch text-[#c0c0c0] text-[19.800px] shrink-0">
    <div className="w-[202px] flex items-center pl-[15px] gap-[7px] border-r-[3px] border-[#161616] ml-[2px] shrink-0"><FolderFind className="w-[25px] h-[22px]" />Content Drawer</div>
    <div className="w-[162px] flex items-center pl-[18px] gap-[9px] border-r-[3px] border-[#161616] shrink-0">
      <svg viewBox="0 0 20 22" className="w-[20px] h-[22px]"><path fillRule="evenodd" d="M0 2h20v20H0zM3 12l4 3-4 3v-1.500l2-1.500-2-1.500zM9 17h7v1.500H9z" fill="#c4c4c4" /><path d="M4 0v4M8 0v4M12 0v4M16 0v4" stroke="#c4c4c4" strokeWidth="2" /></svg>
      Output Log
    </div>
    <div className="w-[137px] flex items-center pl-[21px] gap-[7px] shrink-0">
      <svg viewBox="0 0 24 18" className="w-[24px] h-[18px]" fill="none" stroke="#c4c4c4" strokeWidth="1.500"><rect x="1" y="1" width="22" height="16" /><path d="M4 5l5 3-5 3M11 13h6" /></svg>
      Cmd<ChevronDown className="w-[16px] h-[16px] ml-[8px]" strokeWidth={2.500} />
    </div>
    <div className="w-[450px] h-[32px] self-center bg-[#0f0f0f] border-[2px] border-[#2a2a2a] rounded-[4px] flex items-center pl-[10px] text-[#5c5c5c] text-[18.300px] shrink-0 [font-family:'DejaVu_Sans_Mono',monospace]">
      Enter Console Command
    </div>
    <div className="w-[2px] bg-[#1a1a1a] ml-[6px] shrink-0" />
    <div className="flex-1" />
    <div className="w-[154px] flex items-center pl-[18px] gap-[7px] border-l-[3px] border-[#161616] shrink-0">
      <svg viewBox="0 0 24 24" className="w-[24px] h-[24px]"><path d="M0 0h14l2 2v12l-6 8H0z" fill="#9a9a9a" /><rect x="8" y="1" width="4" height="7" fill="#242424" /><path d="M11 17l4 5 8-10" stroke="#d0d0d0" strokeWidth="3" fill="none" /></svg>
      All Saved
    </div>
    <div className="w-[247px] flex items-center pl-[24px] gap-[8px] border-l-[3px] border-[#161616] shrink-0">
      <svg viewBox="0 0 20 24" className="w-[20px] h-[22px]" fill="none" stroke="#b5b5b5" strokeWidth="2"><circle cx="4" cy="4" r="3" fill="#b5b5b5" /><circle cx="4" cy="20" r="3" fill="#b5b5b5" /><circle cx="16" cy="4" r="3" fill="#b5b5b5" /><path d="M4 6v12M16 6c0 5-12 4-12 8" /></svg>
      Revision Control<ChevronDown className="w-[16px] h-[16px]" strokeWidth={2.500} />
    </div>
  </div>
);

const Box = ({ className }) => <div className={`absolute border-[3px] border-[#ff0000] ${className}`} />;

export default function App() {
  return (
    <div className="relative w-[2560px] h-[1528px] overflow-hidden bg-[#141414] flex flex-col [font-family:Roboto,sans-serif]">
      <TitleBar />
      <Toolbar />
      <div className="h-[6px] shrink-0" />
      <div className="h-[1330px] flex shrink-0">
        <LeftPanel />
        <div className="w-[8px] shrink-0" />
        <div className="w-[1480px] flex flex-col shrink-0 h-full pb-[5px]">
          <Viewport />
          <BlendPanel />
        </div>
        <div className="w-[8px] shrink-0" />
        <RightCol />
      </div>
      <StatusBar />
      {/* red annotation boxes drawn over the screenshot */}
      <Box className="left-[7px] top-[456px] w-[441px] h-[81px]" />
      <Box className="left-[13px] top-[894px] w-[421px] h-[86px]" />
      <Box className="left-[667px] top-[796px] w-[78px] h-[44px]" />
      <Box className="left-[1181px] top-[1064px] w-[224px] h-[112px]" />
      <Box className="left-[2050px] top-[509px] w-[486px] h-[498px]" />
    </div>
  );
}
